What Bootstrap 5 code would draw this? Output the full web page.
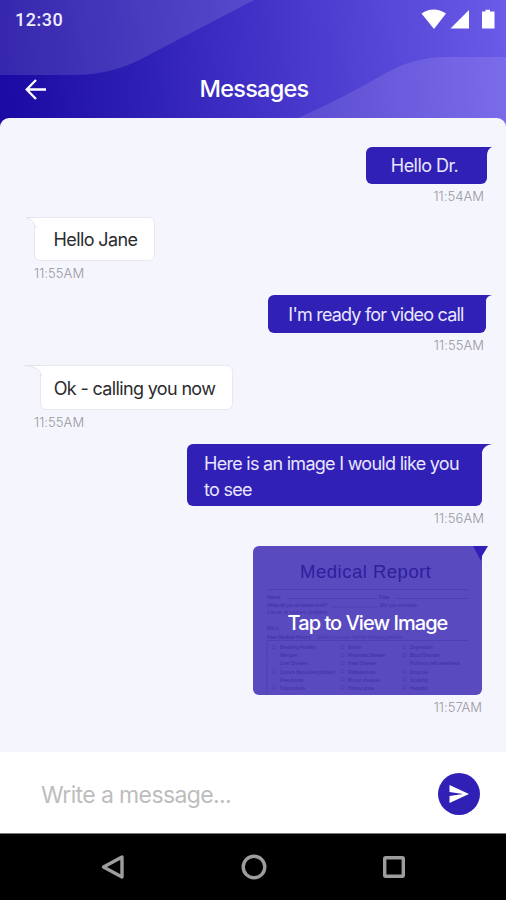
<!DOCTYPE html>
<html lang="en">
<head>
<meta charset="utf-8">
<meta name="viewport" content="width=device-width, initial-scale=1">
<title>Messages</title>
<link href="https://cdn.jsdelivr.net/npm/bootstrap@5.3.0/dist/css/bootstrap.min.css" rel="stylesheet">
<style>
  :root { --brand: #3020b5; --canvas: #f5f5fe; }
  body { font-family: Inter, "Liberation Sans", sans-serif; background: #fff; }
  .phone { width: 506px; height: 900px; }
  .app-header { height: 126px; margin-bottom: -8px; color: #fff; }
  .app-header > svg.waves { inset: 0; }
  .status { height: 40px; padding: 0 11px 0 15px; }
  .clock { font: 500 18px/20px Roboto, sans-serif; letter-spacing: .5px; color: #efedff; }
  .title-bar { height: 50px; margin-top: 24px; }
  .title-bar h1 { font-size: 23.5px; line-height: 28px; font-weight: 450; letter-spacing: -.75px; padding-left: 2px; }
  .back { left: 24px; top: 13px; }
  .chat { height: 634px; background: var(--canvas); border-radius: 9px 9px 0 0; padding-top: 29px; }
  .msg { margin-bottom: 14px; }
  .bubble { border-radius: 6px; font-size: 18px; line-height: 26px; letter-spacing: -.7px; white-space: nowrap; }
  .sent .bubble { background: var(--brand); color: #e9e6ff; height: 37px; }
  .got .bubble { background: #fff; color: #2b2b2e; height: 44px; border: 1px solid #e8e8ee; }
  .sent .bubble { border-top-right-radius: 0; }
  .got .bubble { border-top-left-radius: 0; }
  .tail-r { left: 100%; top: 0; }
  .tail-l { top: -1px; right: calc(100% - 1px); }
  .stamp { font-size: 13px; line-height: 14px; margin-top: 5px; color: #97979d; font-weight: 300; letter-spacing: .05px; }
  .sent .stamp { margin-right: 22px; }
  .got .stamp { margin-left: 34px; }
  .got { margin-bottom: 15px; }
  .sent .b1 { width: 121px; margin-right: 19px; letter-spacing: -.55px; padding-right: 4px; padding-top: 1px; }
  .got .b2 { width: 121px; margin-left: 34px; letter-spacing: -.6px; padding: 1px 0 0 2px; }
  .sent .b3 { width: 218px; height: 38px; margin-right: 20px; letter-spacing: -.8px; padding: 2px 2px 0 0; }
  .got .b4 { width: 193px; height: 45px; margin-left: 40px; letter-spacing: -.65px; padding: 2px 4px 0 0; }
  .sent .b5 { width: 295px; height: 62px; margin-right: 24px; padding: 7px 0 0 17px; letter-spacing: -.72px; }
  .sent .b6 { width: 229px; height: 149px; margin-right: 24px; background: #594abf; }
  .before-long { margin-bottom: 13px; }
  .after-long { margin-bottom: 21px; }
  .b6 .form-art { inset: 0; }
  .b6 .tap { color: #fff; font-size: 20px; line-height: 16px; font-weight: 500; letter-spacing: -.95px; padding-top: 5px; }
  .corner { right: -7px; top: 0; }
  .composer { height: 81px; padding: 2px 26px 0 41px; }
  .composer input { font-size: 23px; letter-spacing: -.62px; color: #444; padding-top: 3px !important; }
  .composer input::placeholder { color: #bdbdbd; opacity: 1; }
  .send { width: 42px; height: 42px; background: var(--brand); }
  .sysnav { height: 67px; background: #000; border-top: 1px solid #777; padding: 0 98px 1px 100px; }
</style>
</head>
<body>
<div class="phone d-flex flex-column overflow-hidden">
  <header class="app-header position-relative flex-shrink-0">
    <svg class="waves position-absolute" width="506" height="126" viewBox="0 0 506 126">
      <defs><linearGradient id="hd" gradientUnits="userSpaceOnUse" x1="0" y1="30" x2="506" y2="0">
        <stop offset="0" stop-color="#1b0aa3"/><stop offset=".25" stop-color="#2d1eb3"/><stop offset=".5" stop-color="#4231c6"/><stop offset="1" stop-color="#6b5be8"/>
      </linearGradient></defs>
      <path fill="url(#hd)" d="M0 0H506V126H0z"/>
      <path fill="#fff" fill-opacity=".12" d="M0 0H254L147 56Q113 75 75 75H0z"/>
      <path fill="#fff" fill-opacity=".11" d="M298 118Q345 97 384 74Q413 57 446 57H506V126H290z"/>
    </svg>
    <div class="status position-relative d-flex justify-content-between align-items-center">
      <span class="clock">12:30</span>
      <svg width="76" height="22" viewBox="0 0 76 22" fill="#fff">
        <path d="M2.500 4.500Q14.500-3.500 27 4.500L15 20z"/><path d="M50 1V19.500H31.500z"/><path d="M63 2.500H66.500V.8H71V2.500H75.500V19.500H63z"/>
      </svg>
    </div>
    <div class="title-bar position-relative d-flex justify-content-center align-items-center">
      <svg class="back position-absolute" width="24" height="24" viewBox="0 0 24 24" fill="none" stroke="#fff" stroke-width="2.300"><path d="M22 12.500H3M12 3L2.700 12.500L12 22"/></svg>
      <h1 class="m-0">Messages</h1>
    </div>
  </header>

  <main class="chat position-relative flex-shrink-0">
    <div class="msg sent d-flex flex-column align-items-end">
      <div class="bubble b1 position-relative d-flex align-items-center justify-content-center"><span>Hello Dr.</span>
        <svg class="tail-r position-absolute" width="6" height="9" viewBox="0 0 6 9"><path fill="#3020b5" d="M0 0H5Q0 2 0 9H-1V0z"/></svg></div>
      <time class="stamp">11:54AM</time>
    </div>
    <div class="msg got d-flex flex-column align-items-start">
      <div class="bubble b2 position-relative d-flex align-items-center justify-content-center"><span>Hello Jane</span>
        <svg class="tail-l position-absolute" width="10" height="11" viewBox="0 0 10 11"><path fill="#fff" d="M0 .5H10V11H9Q9 4 0 .5z"/><path fill="none" stroke="#e3e3ea" d="M10 .5H0Q8.500 3 9.500 11"/></svg></div>
      <time class="stamp">11:55AM</time>
    </div>
    <div class="msg sent before-long d-flex flex-column align-items-end">
      <div class="bubble b3 position-relative d-flex align-items-center justify-content-center"><span>I'm ready for video call</span>
        <svg class="tail-r position-absolute" width="7" height="5" viewBox="0 0 7 5"><path fill="#3020b5" d="M0 0H6Q1 1 0 5z"/></svg></div>
      <time class="stamp">11:55AM</time>
    </div>
    <div class="msg got d-flex flex-column align-items-start">
      <div class="bubble b4 position-relative d-flex align-items-center justify-content-center"><span>Ok - calling you now</span>
        <svg class="tail-l position-absolute" width="18" height="11" viewBox="0 0 18 11"><path fill="#fff" d="M0 .5H18V11H17Q17 2 0 .5z"/><path fill="none" stroke="#e3e3ea" d="M18 .5H0Q16 1 17.500 11"/></svg></div>
      <time class="stamp">11:55AM</time>
    </div>
    <div class="msg sent after-long d-flex flex-column align-items-end">
      <div class="bubble b5 position-relative">Here is an image I would like you<br>to see
        <svg class="tail-r position-absolute" width="11" height="9" viewBox="0 0 11 9"><path fill="#3020b5" d="M0 0H10Q2 1 0 8z"/></svg></div>
      <time class="stamp">11:56AM</time>
    </div>
    <div class="msg sent d-flex flex-column align-items-end">
      <div class="bubble b6 position-relative d-flex align-items-center justify-content-center">
        <svg class="form-art position-absolute" width="229" height="149" viewBox="0 0 229 149" font-family="Liberation Sans, sans-serif" letter-spacing="0" fill="#35279a">
          <text x="47" y="32" font-size="18.500" textLength="131" fill="#2d209b">Medical Report</text>
          <g stroke="#4c3daf" stroke-width=".8"><path d="M14 43.500H215M34 52.500H124M142 52.500H215M80 61H124M14 94.500H215M14 94.500V148"/></g>
          <g font-size="5" opacity=".75">
            <text x="14" y="53">Name</text><text x="126" y="53">Date</text>
            <text x="14" y="61" textLength="60">What did you do before work?</text><text x="127" y="61">Did you exercise</text>
            <text x="14" y="68" font-size="4.500" textLength="60">Cause of current problem</text>
            <text x="14" y="84">Did it</text>
            <text x="14" y="92.500" textLength="45">Past Medical History:</text><text x="64" y="92.500" opacity=".6" textLength="86">check if you ever had the following problem</text>
          </g>
          <g font-size="4.500" opacity=".75">
            <text x="27" y="103" textLength="36">Breathing Problem</text><text x="27" y="111">Allergies</text><text x="27" y="119" textLength="27">Liver Disease</text><text x="27" y="127.500" textLength="55">Current Bone/Joint problem</text><text x="27" y="135.500">Pneumonia</text><text x="27" y="144">Tuberculosis</text>
            <text x="95" y="103">Stroke</text><text x="95" y="111" textLength="37">Rheumatic Disease</text><text x="95" y="119">Heart Disease</text><text x="95" y="127.500">Diabetes/Low</text><text x="95" y="135.500" textLength="32">Blood disease</text><text x="95" y="144">Kidney stone</text>
            <text x="157" y="103">Depression</text><text x="157" y="111">Blood Disorder</text><text x="157" y="119" textLength="50">Problems with anesthesia</text><text x="157" y="127.500">Drug use</text><text x="157" y="135.500">Smoking</text><text x="157" y="144">Hepatitis</text>
          </g>
          <g fill="none" stroke="#4738aa" stroke-width=".5"><path d="M19 99.500h3v3h-3zM19 124h3v3h-3zM19 140h3v3h-3zM88 99.500h3v3h-3zM88 107.500h3v3h-3zM88 115.500h3v3h-3zM88 124h3v3h-3zM88 132h3v3h-3zM88 140h3v3h-3zM150 99.500h3v3h-3zM150 107.500h3v3h-3zM150 124h3v3h-3zM150 132h3v3h-3zM150 140h3v3h-3z"/></g>
        </svg>
        <svg class="corner position-absolute" width="16" height="16" viewBox="0 0 16 16"><path fill="#3020b5" d="M0 0H15L9 10L8 15Z"/></svg>
        <span class="tap position-relative">Tap to View Image</span>
      </div>
      <time class="stamp me-4">11:57AM</time>
    </div>
  </main>

  <form class="composer bg-white d-flex align-items-center justify-content-between flex-shrink-0">
    <input class="border-0 p-0 bg-transparent" type="text" placeholder="Write a message..." aria-label="Message">
    <button class="send btn rounded-circle border-0 p-0 d-flex align-items-center justify-content-center" type="button" aria-label="Send">
      <svg width="20" height="18" viewBox="0 0 20 18" fill="#fff"><path d="M.500 0L20 9L.500 18V11L14 9L.500 7z"/></svg>
    </button>
  </form>

  <nav class="sysnav d-flex align-items-center justify-content-between flex-shrink-0">
    <svg width="28" height="28" viewBox="0 0 28 28" fill="none" stroke="#9d9d9d" stroke-width="3.400" stroke-linejoin="round"><path d="M22 4V24L3.500 14z"/></svg>
    <svg width="28" height="28" viewBox="0 0 28 28" fill="none" stroke="#9d9d9d" stroke-width="3.400"><circle cx="14" cy="14" r="10.800"/></svg>
    <svg width="28" height="28" viewBox="0 0 28 28" fill="none" stroke="#9d9d9d" stroke-width="3.400"><rect x="4.700" y="4.700" width="18.600" height="18.600" rx="1"/></svg>
  </nav>
</div>
<script src="https://cdn.jsdelivr.net/npm/bootstrap@5.3.0/dist/js/bootstrap.bundle.min.js"></script>
</body>
</html>
